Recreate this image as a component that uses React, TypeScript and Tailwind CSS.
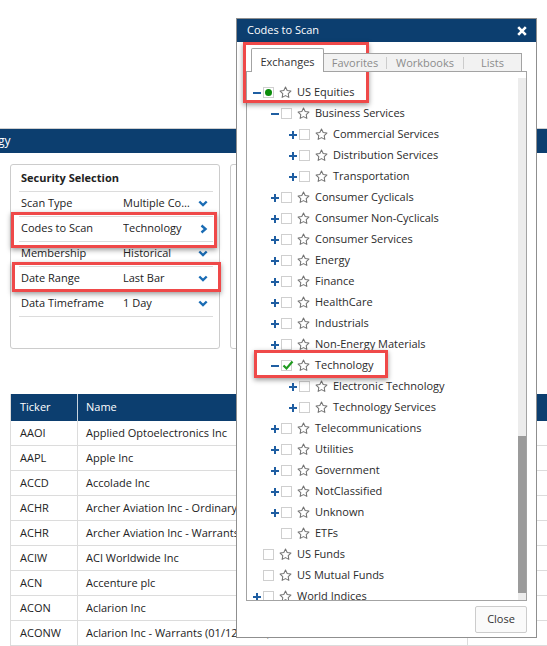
import React from 'react';

type TreeNode = {
  label: string;
  level: 0 | 1 | 2;
  toggle?: '+' | '-';
  state?: 'partial' | 'checked';
};

const tree: TreeNode[] = [
  { label: 'US Equities', level: 0, toggle: '-', state: 'partial' },
  { label: 'Business Services', level: 1, toggle: '-' },
  { label: 'Commercial Services', level: 2, toggle: '+' },
  { label: 'Distribution Services', level: 2, toggle: '+' },
  { label: 'Transportation', level: 2, toggle: '+' },
  { label: 'Consumer Cyclicals', level: 1, toggle: '+' },
  { label: 'Consumer Non-Cyclicals', level: 1, toggle: '+' },
  { label: 'Consumer Services', level: 1, toggle: '+' },
  { label: 'Energy', level: 1, toggle: '+' },
  { label: 'Finance', level: 1, toggle: '+' },
  { label: 'HealthCare', level: 1, toggle: '+' },
  { label: 'Industrials', level: 1, toggle: '+' },
  { label: 'Non-Energy Materials', level: 1, toggle: '+' },
  { label: 'Technology', level: 1, toggle: '-', state: 'checked' },
  { label: 'Electronic Technology', level: 2, toggle: '+' },
  { label: 'Technology Services', level: 2, toggle: '+' },
  { label: 'Telecommunications', level: 1, toggle: '+' },
  { label: 'Utilities', level: 1, toggle: '+' },
  { label: 'Government', level: 1, toggle: '+' },
  { label: 'NotClassified', level: 1, toggle: '+' },
  { label: 'Unknown', level: 1, toggle: '+' },
  { label: 'ETFs', level: 1 },
  { label: 'US Funds', level: 0 },
  { label: 'US Mutual Funds', level: 0 },
  { label: 'World Indices', level: 0, toggle: '+' },
];

const indent: Record<number, string> = { 0: 'pl-[6px]', 1: 'pl-[24px]', 2: 'pl-[42px]' };

const settings = [
  { label: 'Scan Type', value: 'Multiple Codes', icon: 'down' },
  { label: 'Codes to Scan', value: 'Technology', icon: 'right' },
  { label: 'Membership', value: 'Historical', icon: 'down' },
  { label: 'Date Range', value: 'Last Bar', icon: 'down' },
  { label: 'Data Timeframe', value: '1 Day', icon: 'down' },
];

const rows = [
  ['AAOI', 'Applied Optoelectronics Inc'],
  ['AAPL', 'Apple Inc'],
  ['ACCD', 'Accolade Inc'],
  ['ACHR', 'Archer Aviation Inc - Ordinary Shares - Class A'],
  ['ACHR', 'Archer Aviation Inc - Warrants (09/17/2026)'],
  ['ACIW', 'ACI Worldwide Inc'],
  ['ACN', 'Accenture plc'],
  ['ACON', 'Aclarion Inc'],
  ['ACONW', 'Aclarion Inc - Warrants (01/12/2027)'],
  ['', ''],
];

const Star = () => (
  <svg width="13" height="13" viewBox="0 0 24 24" fill="none" stroke="#747474" strokeWidth="1.9" strokeLinejoin="round">
    <polygon points="12 2 15.09 8.26 22 9.27 17 14.14 18.18 21.02 12 17.77 5.82 21.02 7 14.14 2 9.27 8.91 8.26 12 2" />
  </svg>
);

const Toggle = ({ kind }: { kind?: '+' | '-' }) => (
  <span className="w-[8px] h-[8px] flex">
    {kind && (
      <svg width="8" height="8" viewBox="0 0 8 8">
        <path d={kind === '+' ? 'M0 4h8M4 0v8' : 'M0 4h8'} stroke="#1f5ea2" strokeWidth="2" />
      </svg>
    )}
  </span>
);

const Chevron = ({ dir }: { dir: string }) =>
  dir === 'right' ? (
    <svg width="9" height="10" viewBox="0 0 9 10">
      <path d="M2.5 1.5l4 3.5-4 3.5" fill="none" stroke="#1a6cb4" strokeWidth="2.4" />
    </svg>
  ) : (
    <svg width="10" height="7" viewBox="0 0 10 7">
      <path d="M1.3 1.5l3.7 3.5 3.7-3.5" fill="none" stroke="#1a6cb4" strokeWidth="2.4" />
    </svg>
  );

const Highlight = ({ className }: { className: string }) => (
  <div className={`absolute border-[3px] border-[#ef4949] shadow-[0_2px_5px_rgba(0,0,0,0.4)] ${className}`} />
);

export default function App() {
  return (
    <div className="relative w-[547px] h-[646px] overflow-hidden bg-white font-['Open_Sans',sans-serif] text-[11px] text-[#222222]">
      {/* page behind the dialog */}
      <div className="h-[128px]" />
      <div className="h-[25px] border-t border-[#cfcfcf] bg-[#0c3e6f] flex items-center text-white text-[12px]">
        <span className="-ml-[2px]">gy</span>
      </div>

      <div className="flex gap-[10px] pl-[10px] mt-[11px]">
        <div className="w-[210px] h-[185px] border border-[#cccccc] rounded-[3px] pl-[8px] pr-[6px]">
          <div className="h-[27px] flex items-center border-b border-[#dcdcdc] pl-[2px] font-bold">Security Selection</div>
          {settings.map((s) => (
            <div key={s.label} className="h-[25px] flex items-center border-b border-[#dcdcdc] pl-[2px] pb-px">
              <span className="w-[102px]">{s.label}</span>
              <span className="w-[72px] truncate">{s.value}</span>
              <span className="ml-auto mr-[5px] flex">
                <Chevron dir={s.icon} />
              </span>
            </div>
          ))}
        </div>
        <div className="w-[300px] h-[185px] border border-[#cccccc] rounded-[3px]" />
      </div>

      <div className="ml-[10px] mt-[45px] w-[560px] border-l border-[#dcdcdc]">
        <div className="h-[27px] flex bg-[#0c3e6f] text-white">
          <div className="w-[67px] pl-[9px] flex items-center border-r border-[#c8d3de]">Ticker</div>
          <div className="w-[390px] pl-[8px] flex items-center border-r border-[#c8d3de]">Name</div>
          <div className="flex-1" />
        </div>
        {rows.map(([t, n], i) => (
          <div key={i} className="h-[25px] flex border-b border-[#dcdcdc]">
            <div className="w-[67px] pl-[9px] flex items-center border-r border-[#dcdcdc]">{t}</div>
            <div className="w-[390px] pl-[8px] flex items-center border-r border-[#dcdcdc] whitespace-nowrap overflow-hidden">{n}</div>
            <div className="flex-1" />
          </div>
        ))}
      </div>

      {/* Codes to Scan dialog */}
      <div className="absolute left-[236px] top-[18px] w-[301px] h-[620px] border border-[#8f8f8f] bg-white flex flex-col">
        <div className="h-[23px] bg-[#0c3e6f] flex items-center justify-between pl-[10px] pr-[9px] text-white">
          <span>Codes to Scan</span>
          <svg width="10" height="10" viewBox="0 0 10 10">
            <path d="M1.2 1.2l7.6 7.6M8.8 1.2l-7.6 7.6" stroke="#ffffff" strokeWidth="2.6" />
          </svg>
        </div>

        <div className="flex-1 flex flex-col px-[9px] pt-[6px]">
          <div className="relative z-10 flex items-end ml-[5px] mr-[5px] -mb-px">
            <div className="w-[73px] h-[24px] border border-b-0 border-[#a3a3a3] bg-white pt-[5px] leading-[15px] text-center text-[#333333] rounded-t-[2px]">
              Exchanges
            </div>
            <div className="flex-1 h-[19px] border-t border-r border-b border-[#a3a3a3] bg-[#f2f2f2] flex items-center text-[#8c8c8c] leading-[15px]">
              <span className="w-[62px] text-center">Favorites</span>
              <span className="w-px h-[12px] bg-[#cccccc]" />
              <span className="w-[76px] text-center">Workbooks</span>
              <span className="w-px h-[12px] bg-[#cccccc]" />
              <span className="flex-1 text-center">Lists</span>
            </div>
          </div>

          <div className="h-[530px] border border-[#a3a3a3] flex">
            <div className="flex-1 overflow-hidden pt-[10px]">
              {tree.map((n) => (
                <div key={n.label} className={`h-[21px] flex items-center whitespace-nowrap ${indent[n.level]}`}>
                  <Toggle kind={n.toggle} />
                  <span className="relative ml-[2px] w-[11px] h-[11px] border border-[#cfcfcf] bg-white flex items-center justify-center">
                    {n.state === 'partial' && <span className="w-[7px] h-[7px] rounded-full bg-[#0b8c0b]" />}
                    {n.state === 'checked' && (
                      <svg className="absolute left-[0px] top-[-1px]" width="12" height="11" viewBox="0 0 12 11">
                        <path d="M1.5 5.5l3 3 6-7" fill="none" stroke="#1f9a1f" strokeWidth="2.2" />
                      </svg>
                    )}
                  </span>
                  <span className="ml-[5px] flex">
                    <Star />
                  </span>
                  <span className="ml-[5px] text-[#2b2b2b]">{n.label}</span>
                </div>
              ))}
            </div>
            <div className="w-[8px] mt-[6px] bg-[#ececec] flex flex-col">
              <div className="flex-1" />
              <div className="h-[157px] bg-[#9b9b9b]" />
              <div className="h-[7px]" />
            </div>
          </div>

          <div className="flex justify-end mt-[5px]">
            <div className="w-[52px] h-[27px] border border-[#cccccc] rounded-[2px] bg-[#fafafa] flex items-center justify-center text-[#333333]">
              Close
            </div>
          </div>
        </div>
      </div>

      {/* annotation boxes */}
      <Highlight className="left-[243px] top-[42px] w-[126px] h-[61px]" />
      <Highlight className="left-[254px] top-[350px] w-[134px] h-[28px]" />
      <Highlight className="left-[11px] top-[212px] w-[206px] h-[36px]" />
      <Highlight className="left-[12px] top-[262px] w-[209px] h-[30px]" />
    </div>
  );
}
